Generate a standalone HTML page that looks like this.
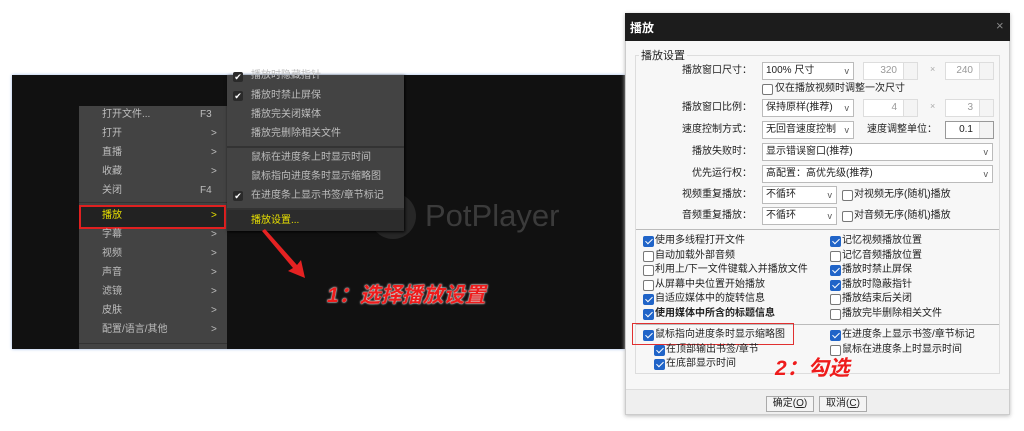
<!DOCTYPE html>
<html><head><meta charset="utf-8"><style>
*{margin:0;padding:0;box-sizing:border-box}
body{width:1024px;height:431px;background:#fff;position:relative;overflow:hidden;font-family:"Liberation Sans","Noto Sans CJK SC",sans-serif}
.a{position:absolute;white-space:nowrap}
#dark{left:12px;top:75px;width:620px;height:274px;background:#111;box-shadow:0 0 3px #9bb8e8}
.mi{position:absolute;font-size:10px;color:#bdbdbd;line-height:12px}
.cm{position:absolute;width:10px;height:10px;background:#2a2a2a;border-radius:2px;color:#fff;font-size:9px;line-height:10px;text-align:center}
.lb{position:absolute;font-size:10px;color:#222;line-height:14px;text-align:right}
.cb{position:absolute;width:11px;height:11px;border:1px solid #777;border-radius:2px;background:#fff}
.cb.on{background:#2064c8;border-color:#2064c8}
.cb.on:after{content:"";position:absolute;left:3px;top:0px;width:3px;height:6px;border:solid #fff;border-width:0 1.5px 1.5px 0;transform:rotate(45deg)}
.ct{position:absolute;font-size:10px;color:#222;line-height:14px}
.combo{position:absolute;height:18px;border:1px solid #bbb;background:#fff;font-size:10px;line-height:16px;padding-left:3px;color:#222}
.combo .v{position:absolute;right:4px;top:0;font-size:9px;color:#555}
.spin{position:absolute;height:18px;border:1px solid #ddd;background:#fff;font-size:10px;line-height:16px;color:#999;text-align:right;padding-right:20px}
.spin:after{content:"";position:absolute;right:0;top:0;width:13px;height:16px;border-left:1px solid #ddd;background:#f4f4f4}
</style></head><body>
<div class="a" id="dark"></div>
<div class="a" style="left:370px;top:193px;width:46px;height:46px;border-radius:50%;background:#272727"></div>
<div class="a" style="left:425px;top:196px;font-size:31px;color:#3b3b3b;line-height:40px">PotPlayer</div>
<div class="a" style="left:79px;top:106px;width:148px;height:243px;background:#434343"></div>
<div class="a" style="left:79px;top:202px;width:148px;height:1px;background:#333"></div>
<div class="a" style="left:79px;top:343px;width:148px;height:1px;background:#333"></div>
<div class="a" style="left:79px;top:205px;width:147px;height:24px;background:#222;border:2px solid #e02020"></div>
<div class="mi" style="left:102px;top:109px">打开文件...</div><div class="mi" style="left:200px;top:109px">F3</div>
<div class="mi" style="left:102px;top:128px">打开</div><div class="mi" style="left:211px;top:128px">&gt;</div>
<div class="mi" style="left:102px;top:147px">直播</div><div class="mi" style="left:211px;top:147px">&gt;</div>
<div class="mi" style="left:102px;top:166px">收藏</div><div class="mi" style="left:211px;top:166px">&gt;</div>
<div class="mi" style="left:102px;top:185px">关闭</div><div class="mi" style="left:200px;top:185px">F4</div>
<div class="mi" style="left:102px;top:210px;color:#e8e000">播放</div><div class="mi" style="left:211px;top:210px;color:#e8e000">&gt;</div>
<div class="mi" style="left:102px;top:229px">字幕</div><div class="mi" style="left:211px;top:229px">&gt;</div>
<div class="mi" style="left:102px;top:248px">视频</div><div class="mi" style="left:211px;top:248px">&gt;</div>
<div class="mi" style="left:102px;top:267px">声音</div><div class="mi" style="left:211px;top:267px">&gt;</div>
<div class="mi" style="left:102px;top:286px">滤镜</div><div class="mi" style="left:211px;top:286px">&gt;</div>
<div class="mi" style="left:102px;top:305px">皮肤</div><div class="mi" style="left:211px;top:305px">&gt;</div>
<div class="mi" style="left:102px;top:324px">配置/语言/其他</div><div class="mi" style="left:211px;top:324px">&gt;</div>
<div class="a" style="left:227px;top:75px;width:177px;height:156px;background:#434343;box-shadow:1px 1px 3px #000"></div>
<div class="a" style="left:227px;top:146px;width:177px;height:2px;background:#333"></div>
<div class="a" style="left:227px;top:208px;width:177px;height:2px;background:#333"></div>
<div class="a" style="left:227px;top:210px;width:177px;height:21px;background:#2c2c2c"></div>
<div class="cm" style="left:233px;top:72px">✔</div><div class="mi" style="left:251px;top:70px">播放时隐藏指针</div>
<div class="cm" style="left:233px;top:91px">✔</div><div class="mi" style="left:251px;top:90px">播放时禁止屏保</div>
<div class="mi" style="left:251px;top:109px">播放完关闭媒体</div>
<div class="mi" style="left:251px;top:128px">播放完删除相关文件</div>
<div class="mi" style="left:251px;top:152px">鼠标在进度条上时显示时间</div>
<div class="mi" style="left:251px;top:171px">鼠标指向进度条时显示缩略图</div>
<div class="cm" style="left:233px;top:191px">✔</div><div class="mi" style="left:251px;top:190px">在进度条上显示书签/章节标记</div>
<div class="mi" style="left:251px;top:215px;color:#e8e000">播放设置...</div>
<svg class="a" style="left:255px;top:225px" width="60" height="60"><polygon points="7,6 10,4 42,40 46,35 50,53 33,46 38,43" fill="#e52222"/></svg>
<div class="a" style="left:327px;top:283px;font-size:21px;font-weight:bold;font-style:italic;color:#ee1c1c;text-shadow:0 0 2px #fff,0 0 1px #fff;line-height:25px">1：选择播放设置</div>
<div class="a" style="left:625px;top:13px;width:385px;height:402px;background:#f7f7f7;border:1px solid #ccc;box-shadow:0 1px 4px #bbb"></div>
<div class="a" style="left:625px;top:13px;width:385px;height:28px;background:#1c1c1c"></div>
<div class="a" style="left:630px;top:19px;font-size:12px;font-weight:bold;color:#fff">播放</div>
<div class="a" style="left:996px;top:18px;font-size:13px;color:#888">×</div>
<div class="a" style="left:635px;top:55px;width:365px;height:319px;border:1px solid #ddd"></div>
<div class="a" style="left:639px;top:47px;font-size:11px;color:#222;background:#f7f7f7;padding:0 2px">播放设置</div>
<div class="lb" style="left:660px;top:64px;width:92px">播放窗口尺寸：</div>
<div class="combo" style="left:762px;top:62px;width:92px">100% 尺寸<span class="v">v</span></div>
<div class="spin" style="left:863px;top:62px;width:55px">320</div><div class="a" style="left:930px;top:64px;font-size:9px;color:#aaa">×</div>
<div class="spin" style="left:945px;top:62px;width:49px">240</div>
<div class="cb" style="left:762px;top:84px"></div><div class="ct" style="left:775px;top:82px">仅在播放视频时调整一次尺寸</div>
<div class="lb" style="left:660px;top:101px;width:92px">播放窗口比例：</div>
<div class="combo" style="left:762px;top:99px;width:92px">保持原样(推荐)<span class="v">v</span></div>
<div class="spin" style="left:863px;top:99px;width:55px">4</div><div class="a" style="left:930px;top:101px;font-size:9px;color:#aaa">×</div>
<div class="spin" style="left:945px;top:99px;width:49px">3</div>
<div class="lb" style="left:660px;top:123px;width:92px">速度控制方式：</div>
<div class="combo" style="left:762px;top:121px;width:92px;overflow:hidden">无回音速度控制<span class="v" style="background:#fff;padding-left:3px">v</span></div>
<div class="lb" style="left:860px;top:123px;width:77px">速度调整单位：</div>
<div class="spin" style="left:945px;top:121px;width:49px;color:#222;border-color:#999">0.1</div>
<div class="lb" style="left:660px;top:145px;width:92px">播放失败时：</div>
<div class="combo" style="left:762px;top:143px;width:231px">显示错误窗口(推荐)<span class="v">v</span></div>
<div class="lb" style="left:660px;top:167px;width:92px">优先运行权：</div>
<div class="combo" style="left:762px;top:165px;width:231px">高配置：高优先级(推荐)<span class="v">v</span></div>
<div class="lb" style="left:660px;top:188px;width:92px">视频重复播放：</div>
<div class="combo" style="left:762px;top:186px;width:75px">不循环<span class="v">v</span></div>
<div class="cb" style="left:842px;top:190px"></div><div class="ct" style="left:854px;top:188px">对视频无序(随机)播放</div>
<div class="lb" style="left:660px;top:209px;width:92px">音频重复播放：</div>
<div class="combo" style="left:762px;top:207px;width:75px">不循环<span class="v">v</span></div>
<div class="cb" style="left:842px;top:211px"></div><div class="ct" style="left:854px;top:209px">对音频无序(随机)播放</div>
<div class="a" style="left:636px;top:229px;width:363px;height:1px;background:#bbb"></div>
<div class="cb on" style="left:643px;top:236px"></div><div class="ct" style="left:655px;top:234px">使用多线程打开文件</div>
<div class="cb" style="left:643px;top:251px"></div><div class="ct" style="left:655px;top:249px">自动加载外部音频</div>
<div class="cb" style="left:643px;top:265px"></div><div class="ct" style="left:655px;top:263px">利用上/下一文件键载入并播放文件</div>
<div class="cb" style="left:643px;top:280px"></div><div class="ct" style="left:655px;top:278px">从屏幕中央位置开始播放</div>
<div class="cb on" style="left:643px;top:294px"></div><div class="ct" style="left:655px;top:292px">自适应媒体中的旋转信息</div>
<div class="cb on" style="left:643px;top:309px"></div><div class="ct" style="left:655px;top:307px;font-weight:bold">使用媒体中所含的标题信息</div>
<div class="cb on" style="left:830px;top:236px"></div><div class="ct" style="left:842px;top:234px">记忆视频播放位置</div>
<div class="cb" style="left:830px;top:251px"></div><div class="ct" style="left:842px;top:249px">记忆音频播放位置</div>
<div class="cb on" style="left:830px;top:265px"></div><div class="ct" style="left:842px;top:263px">播放时禁止屏保</div>
<div class="cb on" style="left:830px;top:280px"></div><div class="ct" style="left:842px;top:278px">播放时隐蔽指针</div>
<div class="cb" style="left:830px;top:294px"></div><div class="ct" style="left:842px;top:292px">播放结束后关闭</div>
<div class="cb" style="left:830px;top:309px"></div><div class="ct" style="left:842px;top:307px">播放完毕删除相关文件</div>
<div class="a" style="left:636px;top:324px;width:363px;height:1px;background:#bbb"></div>
<div class="a" style="left:632px;top:323px;width:162px;height:22px;border:1.5px solid #e03030"></div>
<div class="cb on" style="left:643px;top:330px"></div><div class="ct" style="left:655px;top:328px">鼠标指向进度条时显示缩略图</div>
<div class="cb on" style="left:654px;top:345px"></div><div class="ct" style="left:666px;top:343px">在顶部输出书签/章节</div>
<div class="cb on" style="left:654px;top:359px"></div><div class="ct" style="left:666px;top:357px">在底部显示时间</div>
<div class="cb on" style="left:830px;top:330px"></div><div class="ct" style="left:842px;top:328px">在进度条上显示书签/章节标记</div>
<div class="cb" style="left:830px;top:345px"></div><div class="ct" style="left:842px;top:343px">鼠标在进度条上时显示时间</div>
<div class="a" style="left:775px;top:356px;font-size:21px;font-weight:bold;font-style:italic;color:#ee1c1c;text-shadow:0 0 2px #fff;line-height:25px">2：勾选</div>
<div class="a" style="left:626px;top:389px;width:383px;height:25px;background:#efefef;border-top:1px solid #ddd"></div>
<div class="a" style="left:766px;top:396px;width:48px;height:16px;border:1px solid #aaa;background:#f4f4f4;font-size:10px;line-height:14px;text-align:center;color:#222">确定(<u>O</u>)</div>
<div class="a" style="left:819px;top:396px;width:48px;height:16px;border:1px solid #aaa;background:#f4f4f4;font-size:10px;line-height:14px;text-align:center;color:#222">取消(<u>C</u>)</div>
</body></html>
